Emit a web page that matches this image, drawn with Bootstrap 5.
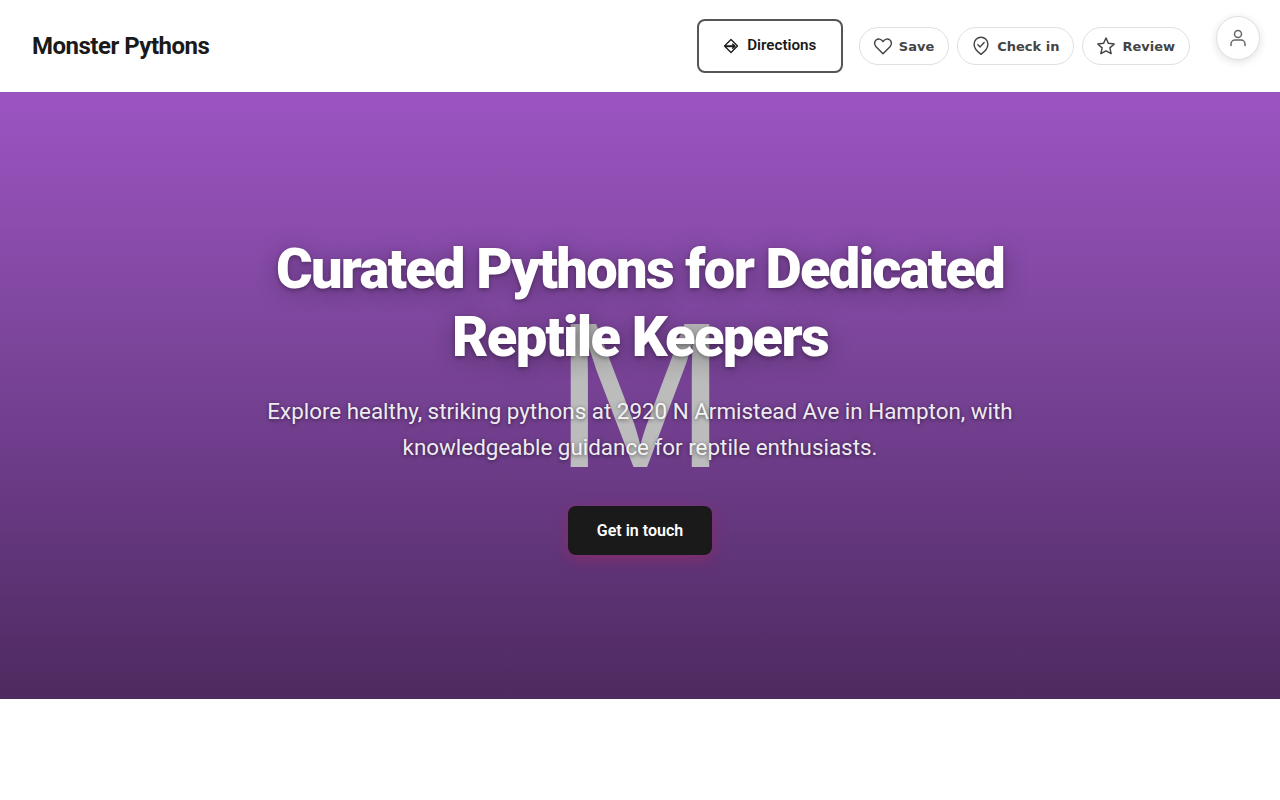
<!DOCTYPE html>
<html lang="en">
<head>
    <meta charset="UTF-8">
    <meta name="viewport" content="width=device-width, initial-scale=1.0">
    <title>Monster Pythons</title>
    <link href="https://cdn.jsdelivr.net/npm/bootstrap@5.3.0/dist/css/bootstrap.min.css" rel="stylesheet">
    <style>
        body {
            background: #fff;
            font-family: Roboto, sans-serif;
            color: #1a1a1a;
        }

        /* Top bar */
        .top-bar {
            height: 92px;
            padding: 0 90px 0 32px;
        }
        .brand-name {
            font-size: 24px;
            font-weight: 700;
            letter-spacing: -0.5px;
            color: #1a1a1a;
        }
        .directions-btn {
            width: 146px;
            height: 54px;
            border: 2px solid #555;
            border-radius: 8px;
            background: #fff;
            font-size: 15.2px;
            font-weight: 600;
            color: #1a1a1a;
            margin-right: 8px;
        }
        .directions-btn span {
            position: relative;
            top: -1px;
        }
        .pill-btn {
            height: 38px;
            padding: 0 14px 0 13px;
            border: 1px solid #e0e0e0;
            border-radius: 19px;
            background: #fff;
            font-family: "DejaVu Sans", sans-serif;
            font-size: 13px;
            font-weight: 700;
            color: #444;
            gap: 6px;
        }
        .pill-btn span {
            position: relative;
            top: 1px;
        }
        .avatar-btn {
            position: absolute;
            top: 16px;
            right: 20px;
            width: 44px;
            height: 44px;
            border: 1px solid #e0e0e0;
            border-radius: 50%;
            background: #fff;
            box-shadow: 0 2px 8px rgba(0, 0, 0, .12);
        }

        /* Hero */
        .hero-band {
            height: 607px;
            background: linear-gradient(180deg, #9c54c2 0%, #7d469c 40%, #6a3a85 65%, #4d2a5f 100%);
        }
        .hero-mark {
            position: absolute;
            top: 200px;
            left: 0;
            width: 100%;
            text-align: center;
            font-family: "Liberation Sans", sans-serif;
            font-size: 207px;
            font-weight: 400;
            line-height: 1;
            color: #bcbcbc;
        }
        .hero-copy {
            position: relative;
            width: 800px;
            padding-top: 143px;
        }
        .hero-title {
            font-size: 56px;
            font-weight: 900;
            line-height: 68px;
            letter-spacing: -1.68px;
            margin: 0 0 22px;
            color: #fff;
            text-shadow: 0 2px 4px rgba(0, 0, 0, .3), 0 4px 24px rgba(0, 0, 0, .3);
        }
        .hero-text {
            font-size: 22.4px;
            font-weight: 400;
            line-height: 36px;
            margin: 0 auto 41px;
            width: 760px;
            color: rgba(255, 255, 255, .92);
            text-shadow: 0 1px 4px rgba(0, 0, 0, .55);
        }
        .touch-btn {
            width: 144px;
            height: 49px;
            border: 0;
            border-radius: 8px;
            background: #1a1a1a;
            font-size: 16px;
            font-weight: 600;
            color: #fff;
            box-shadow: 0 4px 14px rgba(200, 30, 80, .35);
        }
        .page-foot {
            height: 101px;
        }
    </style>
</head>
<body>
    <header class="top-bar d-flex align-items-center justify-content-between position-relative">
        <div class="brand-name">Monster Pythons</div>
        <div class="d-flex align-items-center gap-2">
            <button class="directions-btn d-flex align-items-center justify-content-center gap-2" type="button">
                <svg width="16" height="16" viewBox="0 0 16 16" fill="none" stroke="#1a1a1a" stroke-width="1.3" stroke-linejoin="round"><path d="M8 1.500 14.500 8 8 14.500 1.500 8Z"/><path d="M2 8.200H11.500" stroke-width="2"/><path d="M9.200 5.800 12 8.200 9.200 10.600" stroke-width="1.500"/></svg>
                <span>Directions</span>
            </button>
            <button class="pill-btn d-flex align-items-center" type="button">
                <svg width="20" height="20" viewBox="0 0 18 18" fill="none" stroke="#444" stroke-width="1.3" stroke-linejoin="round"><path d="M9 16 2.700 9.600C.9 7.700 1.100 5 2.800 3.600 4.500 2.200 7.400 2.500 9 5c1.600-2.500 4.500-2.800 6.200-1.400 1.700 1.400 1.900 4.100.1 6Z"/></svg>
                <span>Save</span>
            </button>
            <button class="pill-btn d-flex align-items-center" type="button">
                <svg width="20" height="20" viewBox="0 0 18 18" fill="none" stroke="#444" stroke-width="1.3" stroke-linecap="round" stroke-linejoin="round"><path d="M9 16.500C5.500 14 2.800 11 2.800 7.400a6.200 6.200 0 0 1 12.400 0C15.200 11 12.500 14 9 16.500Z"/><path d="M6.200 7.800 8.200 9.800 11.800 5.800"/></svg>
                <span>Check in</span>
            </button>
            <button class="pill-btn d-flex align-items-center" type="button">
                <svg width="20" height="20" viewBox="0 0 18 18" fill="none" stroke="#444" stroke-width="1.3" stroke-linejoin="round"><path d="M9 1.800 11.200 6.600 16.400 7.200 12.500 10.700 13.600 15.900 9 13.300 4.400 15.900 5.500 10.700 1.600 7.200 6.800 6.600Z"/></svg>
                <span>Review</span>
            </button>
        </div>
        <button class="avatar-btn d-flex align-items-center justify-content-center p-0" type="button" aria-label="Account">
            <svg width="20" height="20" viewBox="0 0 20 20" fill="none" stroke="#666" stroke-width="1.5" stroke-linecap="round"><circle cx="10" cy="6" r="3.500"/><path d="M3 17.500v-1.500a4 4 0 0 1 4-4h6a4 4 0 0 1 4 4v1.500"/></svg>
        </button>
    </header>

    <section class="hero-band position-relative d-flex justify-content-center text-center">
        <div class="hero-mark">M</div>
        <div class="hero-copy">
            <h1 class="hero-title">Curated Pythons for Dedicated Reptile Keepers</h1>
            <p class="hero-text">Explore healthy, striking pythons at 2920 N Armistead Ave in Hampton, with knowledgeable guidance for reptile enthusiasts.</p>
            <button class="touch-btn" type="button">Get in touch</button>
        </div>
    </section>
    <div class="page-foot"></div>

    <script src="https://cdn.jsdelivr.net/npm/bootstrap@5.3.0/dist/js/bootstrap.bundle.min.js"></script>
</body>
</html>
